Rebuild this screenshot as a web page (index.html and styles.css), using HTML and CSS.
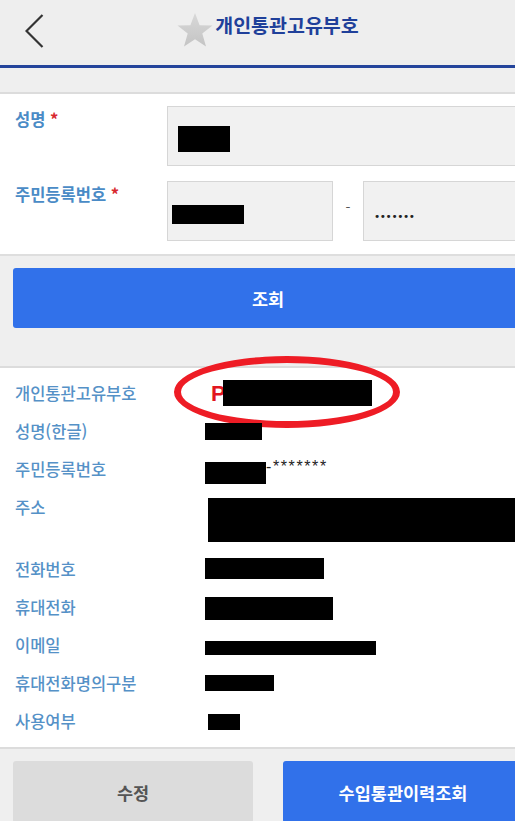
FILE: index.html
```html
<!DOCTYPE html>
<html lang="ko">
<head>
  <meta charset="UTF-8" />
  <meta name="viewport" content="width=device-width, initial-scale=1" />
  <title>개인통관고유부호</title>
  <link rel="stylesheet" href="styles.css">
</head>
<body>
  <div class="page">
    <header class="topbar">
      <button class="back" aria-label="뒤로">
        <svg width="19" height="34" viewBox="0 0 19 34">
          <polyline points="17.5,1 1.5,17 17.5,33" fill="none" stroke="#333" stroke-width="2.2" />
        </svg>
      </button>
      <div class="title">
        <svg class="star" width="36" height="36" viewBox="0 0 36 36">
          <defs>
            <linearGradient id="starFill" x1="0" y1="0" x2="0" y2="1">
              <stop offset="0" stop-color="#d8d8d8" />
              <stop offset="1" stop-color="#c4c4c4" />
            </linearGradient>
          </defs>
          <polygon points="18,1 22.6,13.2 35.5,13.6 25.3,21.6 29,34.5 18,27.2 7,34.5 10.7,21.6 0.5,13.6 13.4,13.2" fill="url(#starFill)" />
        </svg>
        <span>개인통관고유부호</span>
      </div>
      <div></div>
    </header>
    <div class="band"></div>

    <section class="form">
      <div class="form-row">
        <label class="form-label">성명 <em>*</em></label>
        <div class="field field-wide"><span class="mask mask-in-name"></span></div>
      </div>
      <div class="form-row">
        <label class="form-label">주민등록번호 <em>*</em></label>
        <div class="field field-front"><span class="mask mask-in-jumin"></span></div>
        <span class="dash">-</span>
        <div class="field field-back"><span class="dots">•••••••</span></div>
      </div>
    </section>

    <div class="search-area">
      <button class="btn btn-blue btn-search">조회</button>
    </div>

    <section class="result">
      <div class="row row-first">
        <div class="label">개인통관고유부호</div>
        <div class="value"><span class="code-p">P</span><span class="mask mask-code"></span></div>
        <div class="circle"></div>
      </div>
      <div class="row">
        <div class="label">성명(한글)</div>
        <div class="value"><span class="mask mask-name"></span></div>
      </div>
      <div class="row">
        <div class="label">주민등록번호</div>
        <div class="value"><span class="mask mask-jumin"></span><span class="stars">-*******</span></div>
      </div>
      <div class="row row-addr">
        <div class="label">주소</div>
        <div class="value"><span class="mask mask-addr"></span></div>
      </div>
      <div class="row">
        <div class="label">전화번호</div>
        <div class="value"><span class="mask mask-tel"></span></div>
      </div>
      <div class="row">
        <div class="label">휴대전화</div>
        <div class="value"><span class="mask mask-mobile"></span></div>
      </div>
      <div class="row">
        <div class="label">이메일</div>
        <div class="value"><span class="mask mask-mail"></span></div>
      </div>
      <div class="row">
        <div class="label">휴대전화명의구분</div>
        <div class="value"><span class="mask mask-owner"></span></div>
      </div>
      <div class="row">
        <div class="label">사용여부</div>
        <div class="value"><span class="mask mask-use"></span></div>
      </div>
    </section>

    <div class="bottom-bar">
      <button class="btn btn-gray">수정</button>
      <button class="btn btn-blue">수입통관이력조회</button>
    </div>
  </div>
</body>
</html>
```

FILE: styles.css
```css
body {
  margin: 0;
  padding: 0;
  background: #fff;
  overflow: hidden;
  font-family: "Noto Sans CJK KR", "Noto Sans", sans-serif;
}
.page {
  width: 536px;
}
.topbar {
  display: grid;
  grid-template-columns: 1fr auto 1fr;
  height: 65px;
  background: #eeeeee;
  border-bottom: 3px solid #24449b;
}
.back {
  justify-self: start;
  align-self: start;
  margin: 14px 0 0 25px;
  padding: 0;
  border: none;
  background: none;
  line-height: 0;
}
.title {
  display: flex;
  align-items: flex-start;
  gap: 2px;
  padding-top: 12px;
  color: #20409a;
  font-size: 19.5px;
  font-weight: bold;
  line-height: 26px;
}
.band {
  height: 24px;
  background: #efefef;
  border-bottom: 2px solid #dcdcdc;
}
.form {
  padding: 12px 13px 13px 15px;
  border-bottom: 2px solid #dedede;
  display: flex;
  flex-direction: column;
  gap: 15px;
}
.form-row {
  display: flex;
  align-items: flex-start;
}
.form-label {
  width: 152px;
  flex: none;
  padding-top: 1px;
  color: #4a8bc6;
  font-size: 16.5px;
  font-weight: bold;
  line-height: 24px;
}
.form-label em {
  color: #d8282e;
  font-style: normal;
}
.field {
  height: 60px;
  box-sizing: border-box;
  background: #f1f1f1;
  border: 1px solid #d6d6d6;
  display: flex;
  align-items: center;
}
.field-wide {
  flex: 1;
  padding: 6px 0 0 10px;
}
.field-front {
  width: 166px;
  padding: 7px 0 0 4px;
}
.field-back {
  flex: 1;
  padding: 10px 0 0 10px;
}
.dash {
  width: 30px;
  flex: none;
  text-align: center;
  color: #555;
  font-size: 14px;
  line-height: 20px;
  padding-top: 16px;
}
.dots {
  font-family: "DejaVu Sans", sans-serif;
  font-size: 10.5px;
  letter-spacing: -0.4px;
  color: #222;
}
.mask {
  display: inline-block;
  flex: none;
  background: #000;
}
.mask-in-name { width: 52px; height: 26px; }
.mask-in-jumin { width: 72px; height: 19px; }
.search-area {
  background: #efefef;
  padding: 12px 13px 38px 13px;
  border-bottom: 2px solid #dcdcdc;
}
.btn {
  display: block;
  border: none;
  border-radius: 3px;
  font-family: "Noto Sans CJK KR", "Noto Sans", sans-serif;
  font-size: 17.5px;
  font-weight: bold;
  cursor: pointer;
}
.btn-blue {
  background: #3171ea;
  color: #fff;
}
.btn-gray {
  background: #dcdcdc;
  color: #555;
}
.btn-search {
  width: 100%;
  height: 60px;
}
.result {
  padding: 6px 0 7px 15px;
}
.row {
  display: flex;
  align-items: flex-start;
  height: 22px;
  padding: 8px 0;
  line-height: 22px;
  position: relative;
}
.row-addr {
  height: 44px;
  padding-bottom: 10px;
}
.label {
  width: 190px;
  flex: none;
  color: #5591c7;
  font-size: 16.5px;
  font-weight: 500;
}
.value {
  display: flex;
  align-items: flex-start;
  height: 22px;
  font-family: "Liberation Sans", sans-serif;
  font-size: 15px;
  color: #222;
}
.code-p {
  margin-left: 6px;
  color: #e2161f;
  font-size: 22px;
  font-weight: bold;
  line-height: 24px;
}
.circle {
  position: absolute;
  left: 159px;
  top: -18px;
  width: 226px;
  height: 72px;
  border: 7px solid #ee1c25;
  border-radius: 50%;
  box-sizing: border-box;
}
.mask-code { width: 149px; height: 26px; margin: -2px 0 0 -3px; }
.mask-name { width: 57px; height: 17px; margin-top: 3px; }
.mask-jumin { width: 61px; height: 22px; margin-top: 4px; }
.stars {
  font-size: 16px;
  line-height: 16px;
  letter-spacing: 1.6px;
  margin-top: 1px;
}
.mask-addr { width: 320px; height: 44px; margin: 2px 0 0 3px; }
.mask-tel { width: 119px; height: 21px; }
.mask-mobile { width: 128px; height: 23px; margin-top: 1px; }
.mask-mail { width: 171px; height: 14px; margin-top: 7px; }
.mask-owner { width: 69px; height: 16px; margin-top: 3px; }
.mask-use { width: 32px; height: 16px; margin: 4px 0 0 3px; }
.bottom-bar {
  display: flex;
  gap: 30px;
  padding: 12px 13px 0 13px;
  height: 76px;
  box-sizing: border-box;
  background: #efefef;
  border-top: 2px solid #dcdcdc;
}
.bottom-bar .btn {
  flex: 1;
  height: 62px;
}
```
